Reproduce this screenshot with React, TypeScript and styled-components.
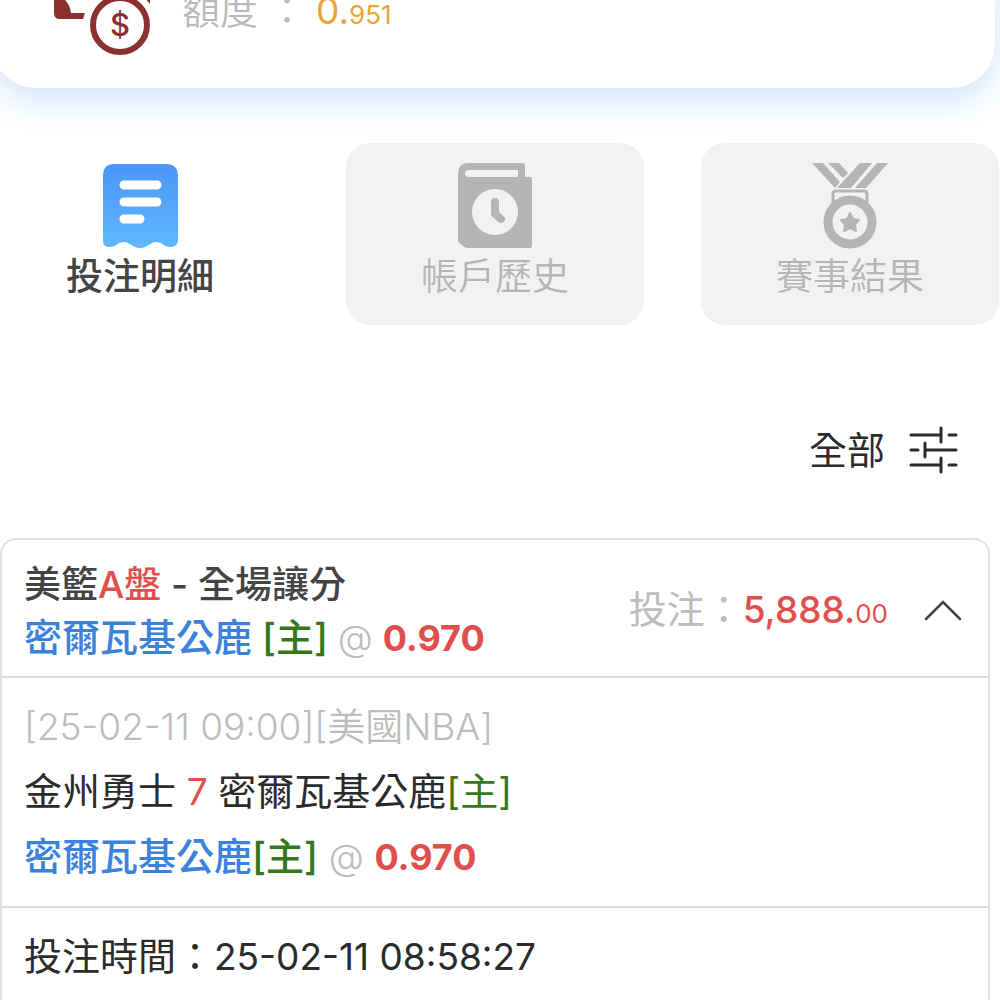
import React, { useState } from 'react';
import styled, { createGlobalStyle, css } from 'styled-components';

const GlobalStyle = createGlobalStyle`
  * { box-sizing: border-box; }
  html, body { margin: 0; background: #fff; overflow-x: hidden; }
  body, button {
    font-family: Inter, 'Noto Sans CJK TC', sans-serif;
    font-size: 38px;
    color: #2b2b2b;
  }
  button { margin: 0; padding: 0; border: 0; background: none; cursor: pointer; }
  svg { display: block; flex: none; }
`;

const Page = styled.div`
  display: flex;
  flex-direction: column;
  min-height: 100vh;
  overflow: hidden;
`;

const BalanceCard = styled.header`
  display: flex;
  align-items: center;
  gap: 32px;
  margin: -32px 5px 0 -8px;
  padding: 0 32px 32px 62px;
  border-radius: 0 0 44px 44px;
  background: #fff;
  box-shadow: 0 14px 36px rgba(70, 150, 240, 0.24);
`;

const Balance = styled.p`
  display: flex;
  align-items: baseline;
  gap: 10px;
  margin: 0;
  line-height: 48px;
  color: #b9b9b9;
  font-weight: 350;
`;

const Num = styled.span`
  font-size: 37px;
`;

const BalanceValue = styled(Num)`
  color: #e9a43a;
  font-weight: 400;
`;

const Small = styled.small`
  font-size: 26px;
`;

const Tabs = styled.nav`
  display: grid;
  grid-template-columns: repeat(3, 1fr);
  gap: 57px;
  margin: 55px 1px 0 -9px;
`;

const Tab = styled.button<{ $active: boolean }>`
  display: flex;
  flex-direction: column;
  align-items: center;
  padding: 20px 0;
  border-radius: 24px;
  line-height: 56px;
  font-size: 37px;
  background: #f2f2f2;
  color: #b5b5b5;
  font-weight: 350;
  ${(p) =>
    p.$active &&
    css`
      background: transparent;
      color: #444;
      font-weight: 500;
    `}
`;

const FilterBar = styled.div`
  display: flex;
  justify-content: flex-end;
  padding: 97px 42px 60px;
`;

const FilterButton = styled.button`
  display: flex;
  align-items: center;
  gap: 24px;
  line-height: 56px;
`;

const BetCard = styled.article`
  margin: 0 10px 0 0;
  border: 2px solid #dfe1e1;
  border-radius: 16px 16px 0 0;
`;

const BetHeader = styled.div`
  display: flex;
  align-items: center;
  justify-content: space-between;
  padding: 18px 24px 11px 22px;
  line-height: 53px;
`;

const BetTitle = styled.h2`
  margin: 0;
  font-size: 37px;
  font-weight: 500;
  color: #444;
`;

const Pick = styled.span`
  font-size: 38px;
  font-weight: 500;
`;

const Stake = styled.div`
  display: flex;
  align-items: center;
  gap: 36px;
`;

const Section = styled.section`
  padding: 16px 22px;
  border-top: 2px solid #dcdede;
  line-height: 65px;
`;

const Line = styled.div<{ $muted?: boolean }>`
  color: ${(p) => (p.$muted ? '#bcbcbc' : 'inherit')};
  font-weight: ${(p) => (p.$muted ? 350 : 400)};
`;

const Ink = styled.span<{ $tone: 'red' | 'blue' | 'green' | 'grey'; $weight?: number }>`
  color: ${(p) => ({ red: '#e04f4d', blue: '#3b82dc', green: '#34781c', grey: '#bcbcbc' })[p.$tone]};
  font-weight: ${(p) => p.$weight ?? 'inherit'};
`;

const Odds = styled.strong`
  font-size: 36px;
  font-weight: 700;
  color: #e04f4d;
`;

const At = styled.span`
  font-size: 36px;
  font-weight: 350;
  color: #bcbcbc;
`;

const MoneyIcon = () => (
  <svg width="96" height="88" viewBox="0 -32 96 88" aria-hidden="true">
    <path
      fill="#8c2f2f"
      d="M0-26h90q6 0 6 6V4l-5-6a34 34 0 0 0-50 0H9Q16 4 17 13H31L29 19H6Q0 19 0 13Z"
    />
    <circle cx="66" cy="25" r="31" fill="#fff" />
    <circle cx="66" cy="25" r="27" fill="none" stroke="#8c2f2f" strokeWidth="6" />
    <text x="66" y="36" textAnchor="middle" fontSize="31" fontWeight="500" fill="#8c2f2f">$</text>
  </svg>
);

const ReceiptIcon = () => (
  <svg width="76" height="86" viewBox="0 0 76 86" aria-hidden="true">
    <defs>
      <linearGradient id="receipt" x1="0" y1="0" x2="0" y2="1">
        <stop offset="0" stopColor="#4b96f8" />
        <stop offset="1" stopColor="#60b8fd" />
      </linearGradient>
    </defs>
    <path
      fill="url(#receipt)"
      d="M12 1H64Q76 1 76 13V78Q75 84 68 84C62 84 60 79 54 79S46 85 38 85S28 79 22 79S14 84 8 84Q1 84 1 78V13Q1 1 12 1Z"
    />
    <path d="M22 22H55M22 39H55M22 56H38" stroke="#fff" strokeWidth="9" strokeLinecap="round" />
  </svg>
);

const HistoryIcon = () => (
  <svg width="76" height="86" viewBox="0 0 76 86" aria-hidden="true">
    <path
      fill="#b5b5b5"
      fillRule="evenodd"
      d="M12 0H65Q68 0 68 3V14H73Q75 14 75 16V83Q75 85 73 85H10Q7 85 5 82L2 80Q1 79 1 76V11Q1 0 12 0ZM12 7Q8 7 8 10Q8 14 12 14H61V7ZM38 26A23 23 0 1 0 38 72A23 23 0 1 0 38 26Z"
    />
    <path d="M38 39V51L44 56" fill="none" stroke="#b5b5b5" strokeWidth="8" strokeLinecap="round" strokeLinejoin="round" />
  </svg>
);

const MedalIcon = () => (
  <svg width="76" height="86" viewBox="0 0 76 86" aria-hidden="true">
    <g fill="#b5b5b5">
      <path d="M0 0H11L28 19L23 25Z" />
      <path d="M16 0H27L36 10L31 15Z" />
      <path d="M48 0H60L39 25H25Z" />
      <path d="M65 0H76L54 25H43Z" />
    </g>
    <path d="M21 42V31Q21 28 24 28H52Q55 28 55 31V42" fill="none" stroke="#b5b5b5" strokeWidth="3" />
    <circle cx="38" cy="59" r="22" fill="#f2f2f2" stroke="#b5b5b5" strokeWidth="9" />
    <path
      fill="#b5b5b5"
      stroke="#b5b5b5"
      strokeWidth="2"
      strokeLinejoin="round"
      d="M38 50L41 56L47 57L43 61.500L44 68L38 65L32 68L33 61.500L29 57L35 56Z"
    />
  </svg>
);

const FilterIcon = () => (
  <svg width="49" height="48" viewBox="0 0 49 48" fill="none" stroke="#2b2b2b" strokeWidth="3" strokeLinecap="round" aria-hidden="true">
    <path d="M2 9H32M40 9H47M32 2V16M2 24H9M16 17V31M17 24H47M2 39H32M40 39H47M32 32V46" />
  </svg>
);

const Chevron = ({ open }: { open: boolean }) => (
  <svg width="40" height="24" viewBox="1 2 40 24" fill="none" stroke="#444" strokeWidth="2.500" strokeLinecap="round" aria-hidden="true">
    <path d={open ? 'M3 21L20 4L37 21' : 'M3 4L20 21L37 4'} />
  </svg>
);

const TABS = [
  { label: '投注明細', Icon: ReceiptIcon },
  { label: '帳戶歷史', Icon: HistoryIcon },
  { label: '賽事結果', Icon: MedalIcon },
];

export default function App() {
  const [active, setActive] = useState(0);
  const [open, setOpen] = useState(true);

  return (
    <Page lang="zh-Hant">
      <GlobalStyle />
      <BalanceCard>
        <MoneyIcon />
        <Balance>
          <span>額度</span>
          <span>：</span>
          <BalanceValue>0.<Small>951</Small></BalanceValue>
        </Balance>
      </BalanceCard>

      <Tabs>
        {TABS.map(({ label, Icon }, i) => (
          <Tab key={label} type="button" $active={i === active} onClick={() => setActive(i)}>
            <Icon />
            {label}
          </Tab>
        ))}
      </Tabs>

      <FilterBar>
        <FilterButton type="button">
          全部
          <FilterIcon />
        </FilterButton>
      </FilterBar>

      <BetCard>
        <BetHeader>
          <BetTitle>
            美籃<Ink $tone="red">A盤</Ink> - 全場讓分
            <br />
            <Pick><Ink $tone="blue">密爾瓦基公鹿</Ink></Pick> <Pick><Ink $tone="green">[主]</Ink></Pick>{' '}
            <At>@</At> <Odds>0.970</Odds>
          </BetTitle>
          <Stake>
            <span>
              <Ink $tone="grey">投注：</Ink>
              <Ink $tone="red" $weight={500}><Num>5,888.</Num></Ink>
              <Ink $tone="red"><Small>00</Small></Ink>
            </span>
            <button type="button" aria-label="投注" aria-expanded={open} onClick={() => setOpen(!open)}>
              <Chevron open={open} />
            </button>
          </Stake>
        </BetHeader>
        {open && (
          <>
            <Section>
              <Line $muted>
                <Num>[25-02-11 09:00][</Num>美國<Num>NBA]</Num>
              </Line>
              <Line>
                金州勇士 <Ink $tone="red"><Num>7</Num></Ink> 密爾瓦基公鹿<Ink $tone="green">[主]</Ink>
              </Line>
              <Line>
                <Pick>
                  <Ink $tone="blue">密爾瓦基公鹿</Ink>
                  <Ink $tone="green">[主]</Ink>
                </Pick>{' '}
                <At>@</At> <Odds>0.970</Odds>
              </Line>
            </Section>
            <Section>
              <Line>投注時間：<Num>25-02-11 08:58:27</Num></Line>
            </Section>
          </>
        )}
      </BetCard>
    </Page>
  );
}
